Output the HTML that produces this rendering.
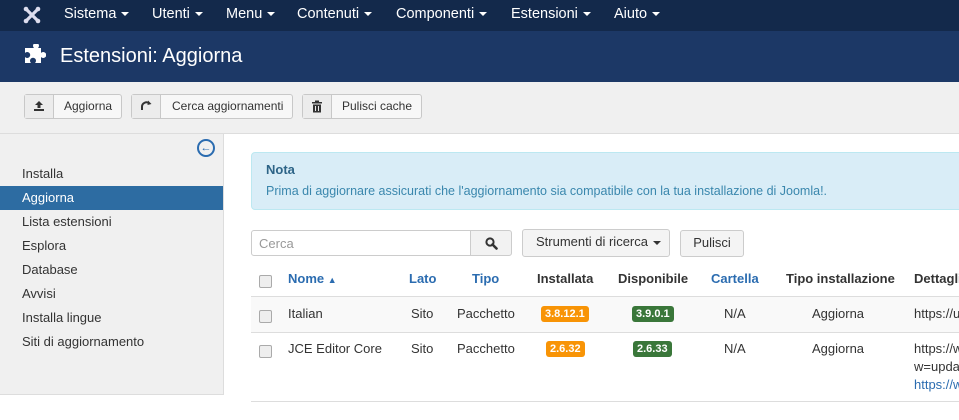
<!DOCTYPE html>
<html><head><meta charset="utf-8"><style>
body{margin:0;width:959px;height:420px;overflow:hidden;font-family:"Liberation Sans",Arial,sans-serif;font-size:13px;color:#333;background:#fff;position:relative}
.nav{position:absolute;left:0;top:0;width:959px;height:31px;background:#13294b;color:#fff;font-size:14.5px}
.nav span{position:absolute;top:6px}
.car{display:inline-block;width:0;height:0;border-left:4px solid transparent;border-right:4px solid transparent;border-top:4px solid #fff;vertical-align:middle;margin-left:5px}
.hdr{position:absolute;left:0;top:31px;width:959px;height:51px;background:#1c3866;color:#fff;font-size:20px}
.tb{position:absolute;left:0;top:82px;width:959px;height:51px;background:#f0f0f0;border-bottom:1px solid #ddd}
.btn{position:absolute;top:12px;height:25px;border:1px solid #c8c8c8;border-radius:3px;background:#f7f7f7;box-sizing:border-box;font-size:12px;line-height:23px}
.btn .ic{position:absolute;left:0;top:0;width:28px;height:23px;border-right:1px solid #c8c8c8;background:#ececec}
.btn .ic svg{position:absolute;left:8px;top:5px}
.side{position:absolute;left:0;top:134px;width:223px;height:260px;background:#f0f0f0;border-right:1px solid #ddd;border-bottom:1px solid #ddd}
.side div{position:absolute;left:22px;font-size:13px;color:#333}
.nota{position:absolute;left:251px;top:152px;width:720px;height:58px;background:#d9edf7;border:1px solid #bce8f1;border-radius:4px;box-sizing:border-box;color:#3a87ad}
.b{position:absolute;color:#fff;font-size:11px;font-weight:bold;padding:1px 4px;border-radius:3px;line-height:14px}
.cb{position:absolute;left:259px;width:11px;height:11px;border:1px solid #aaa;border-radius:2px;background:#eee}
.t{position:absolute}
</style></head><body>
<div class="nav">
<svg style="position:absolute;left:23px;top:6px" width="18" height="18" viewBox="0 0 18 18"><g stroke="#dde" stroke-width="3.2" stroke-linecap="round" fill="none"><path d="M4 4 L14 14 M14 4 L4 14"/></g><g fill="#dde"><circle cx="3" cy="3" r="2.3"/><circle cx="15" cy="3" r="2.3"/><circle cx="3" cy="15" r="2.3"/><circle cx="15" cy="15" r="2.3"/></g></svg>
<span style="left:64px">Sistema<i class="car"></i></span>
<span style="left:152px">Utenti<i class="car"></i></span>
<span style="left:226px">Menu<i class="car"></i></span>
<span style="left:297px">Contenuti<i class="car"></i></span>
<span style="left:396px">Componenti<i class="car"></i></span>
<span style="left:511px">Estensioni<i class="car"></i></span>
<span style="left:614px">Aiuto<i class="car"></i></span>
</div>
<div class="hdr">
<svg style="position:absolute;left:24px;top:13px" width="22" height="22" viewBox="0 0 22 22"><path fill="#fff" d="M7 4 h3 a3 3 0 1 1 4 0 h3 v5 a3 3 0 1 1 0 4 v6 h-6 a3 3 0 1 0 -4 0 h-6 v-6 a3 3 0 1 0 0 -4 v-5 z"/></svg>
<span style="position:absolute;left:60px;top:14px">Estensioni: Aggiorna</span></div>
<div class="tb">
<div class="btn" style="left:24px;width:98px"><div class="ic"><svg width="12" height="12" viewBox="0 0 12 12"><path d="M6 1 L2 5 H4.5 V8 H7.5 V5 H10 Z M1 9 H11 V11 H1 Z" fill="#333"/></svg></div><span style="position:absolute;left:39px">Aggiorna</span></div>
<div class="btn" style="left:131px;width:162px"><div class="ic"><svg width="12" height="12" viewBox="0 0 12 12"><path d="M2 10 V7 A4.5 4.5 0 0 1 9.5 3.5" stroke="#333" stroke-width="2" fill="none"/><path d="M8 0.5 L11.5 4 L7.5 5 Z" fill="#333"/></svg></div><span style="position:absolute;left:40px">Cerca aggiornamenti</span></div>
<div class="btn" style="left:302px;width:120px"><div class="ic"><svg width="12" height="13" viewBox="0 0 12 13"><path d="M1 2 H11 V3.5 H1 Z M4 0.5 H8 V2 H4 Z M2 4.5 H10 V12.5 H2 Z" fill="#333"/><path d="M4.5 6 V11 M7.5 6 V11" stroke="#ececec" stroke-width="1"/></svg></div><span style="position:absolute;left:39px">Pulisci cache</span></div>
</div>
<div class="side">
<div style="left:197px;top:5px;width:14px;height:14px;border:2px solid #2b6cb0;border-radius:50%;color:#2b6cb0;font-size:11px;line-height:14px;text-align:center;font-weight:bold">←</div>
<div style="top:32px">Installa</div>
<div style="left:0;top:52px;width:223px;height:24px;background:#2d6ca2;color:#fff"><span style="position:absolute;left:22px;top:4px">Aggiorna</span></div>
<div style="top:80px">Lista estensioni</div>
<div style="top:104px">Esplora</div>
<div style="top:128px">Database</div>
<div style="top:152px">Avvisi</div>
<div style="top:176px">Installa lingue</div>
<div style="top:200px">Siti di aggiornamento</div>
</div>
<div class="nota"><b style="position:absolute;left:14px;top:9px;font-size:13px;color:#2d6487">Nota</b><span style="position:absolute;left:14px;top:31px;font-size:12.5px">Prima di aggiornare assicurati che l'aggiornamento sia compatibile con la tua installazione di Joomla!.</span></div>
<div style="position:absolute;left:251px;top:230px;width:220px;height:26px;border:1px solid #ccc;border-radius:3px 0 0 3px;box-sizing:border-box;color:#999;padding:5px 7px;font-size:13px">Cerca</div>
<div style="position:absolute;left:470px;top:230px;width:42px;height:26px;border:1px solid #ccc;background:#f2f2f2;box-sizing:border-box;border-radius:0 3px 3px 0"><svg style="position:absolute;left:14px;top:6px" width="13" height="13" viewBox="0 0 13 13"><circle cx="5" cy="5" r="3.6" stroke="#333" stroke-width="2" fill="none"/><path d="M7.5 7.5 L11.5 11.5" stroke="#333" stroke-width="2.6" stroke-linecap="round"/></svg></div>
<div style="position:absolute;left:522px;top:229px;width:148px;height:28px;border:1px solid #ccc;background:#f4f4f4;box-sizing:border-box;border-radius:3px;line-height:24px;padding-left:13px">Strumenti di ricerca<i class="car" style="border-top-color:#333"></i></div>
<div style="position:absolute;left:680px;top:230px;width:64px;height:27px;border:1px solid #ccc;background:#f4f4f4;box-sizing:border-box;border-radius:3px;line-height:24px;text-align:center">Pulisci</div>
<div class="cb" style="top:275px"></div>
<div class="t" style="left:288px;top:271px;color:#2b6cb0;font-weight:bold">Nome <span style="font-size:9px">▲</span></div>
<div class="t" style="left:409px;top:271px;color:#2b6cb0;font-weight:bold">Lato</div>
<div class="t" style="left:472px;top:271px;color:#2b6cb0;font-weight:bold">Tipo</div>
<div class="t" style="left:537px;top:271px;font-weight:bold">Installata</div>
<div class="t" style="left:618px;top:271px;font-weight:bold">Disponibile</div>
<div class="t" style="left:711px;top:271px;color:#2b6cb0;font-weight:bold">Cartella</div>
<div class="t" style="left:786px;top:271px;font-weight:bold">Tipo installazione</div>
<div class="t" style="left:914px;top:271px;font-weight:bold">Dettagli</div>
<div style="position:absolute;left:251px;top:296px;width:708px;height:35px;background:#f9f9f9;border-top:1px solid #ddd;border-bottom:1px solid #ddd"></div>
<div class="cb" style="top:310px"></div>
<div class="t" style="left:288px;top:306px">Italian</div>
<div class="t" style="left:411px;top:306px">Sito</div>
<div class="t" style="left:457px;top:306px">Pacchetto</div>
<div class="b" style="left:541px;top:306px;background:#f89406">3.8.12.1</div>
<div class="b" style="left:632px;top:306px;background:#3a773a">3.9.0.1</div>
<div class="t" style="left:724px;top:306px">N/A</div>
<div class="t" style="left:812px;top:306px">Aggiorna</div>
<div class="t" style="left:914px;top:306px">https://u</div>
<div class="cb" style="top:345px"></div>
<div class="t" style="left:288px;top:341px">JCE Editor Core</div>
<div class="t" style="left:411px;top:341px">Sito</div>
<div class="t" style="left:457px;top:341px">Pacchetto</div>
<div class="b" style="left:546px;top:341px;background:#f89406">2.6.32</div>
<div class="b" style="left:633px;top:341px;background:#3a773a">2.6.33</div>
<div class="t" style="left:724px;top:341px">N/A</div>
<div class="t" style="left:812px;top:341px">Aggiorna</div>
<div class="t" style="left:914px;top:341px">https://w</div>
<div class="t" style="left:914px;top:359px">w=upda</div>
<div class="t" style="left:914px;top:377px;color:#2b6cb0">https://w</div>
<div style="position:absolute;left:251px;top:401px;width:708px;border-top:1px solid #ddd"></div>
</body></html>
